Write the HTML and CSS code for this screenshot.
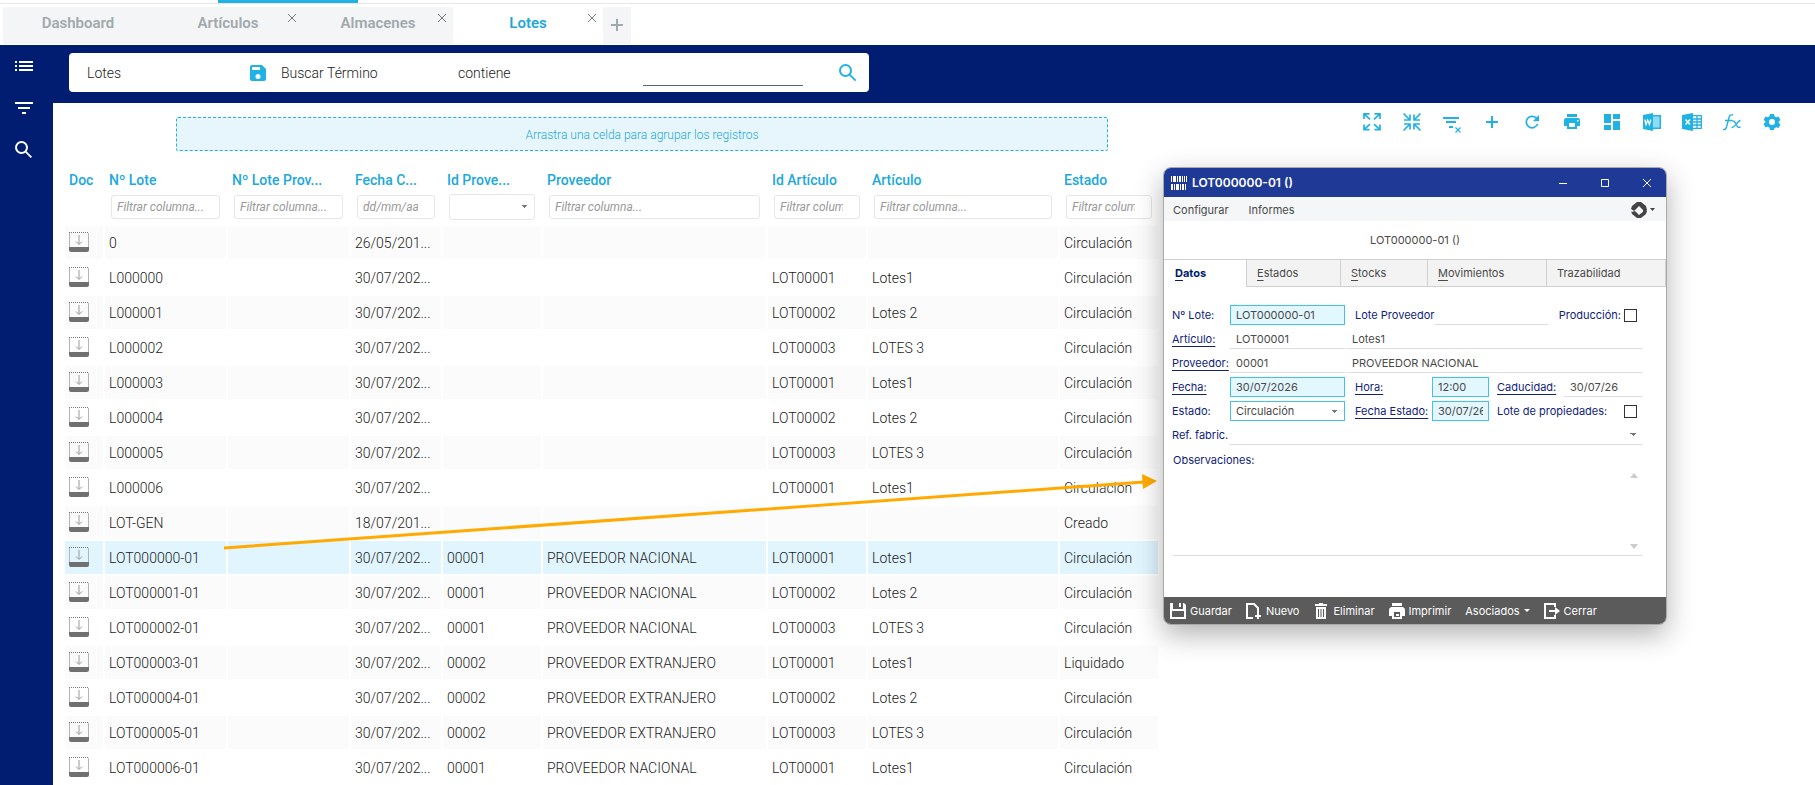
FILE: index.html
```
<!DOCTYPE html>
<html lang="es">
<head>
  <meta charset="UTF-8">
  <title>Lotes</title>
  <link rel="stylesheet" href="styles.css">
</head>
<body>
  <div class="top-line"><span></span></div>
  <nav class="tabs">
    <div class="tab"><a href="#">Dashboard</a></div>
    <div class="tab"><a href="#">Artículos</a><button class="tab-close" aria-label="Cerrar Artículos"><svg viewBox="0 0 8 8"><path d="M0 0l8 8M8 0l-8 8"/></svg></button></div>
    <div class="tab"><a href="#">Almacenes</a><button class="tab-close" aria-label="Cerrar Almacenes"><svg viewBox="0 0 8 8"><path d="M0 0l8 8M8 0l-8 8"/></svg></button></div>
    <div class="tab active"><a href="#">Lotes</a><button class="tab-close" aria-label="Cerrar Lotes"><svg viewBox="0 0 8 8"><path d="M0 0l8 8M8 0l-8 8"/></svg></button></div>
    <button class="tab-add" aria-label="Nueva pestaña"><svg viewBox="0 0 12 12"><path d="M6 0v12M0 6h12"/></svg></button>
  </nav>

  <div class="app">
    <aside class="sidebar">
      <button aria-label="Menú"><svg viewBox="0 0 18 18"><path d="M0 4h2v2H0zM4 4h14v2H4zM0 8h2v2H0zM4 8h14v2H4zM0 12h2v2H0zM4 12h14v2H4z"/></svg></button>
      <button aria-label="Filtros"><svg viewBox="0 0 18 18"><path d="M0 3h18v2H0zM3 8h12v2H3zM7 13h4v2H7z"/></svg></button>
      <button aria-label="Buscar"><svg viewBox="0 0 18 18"><circle cx="6.500" cy="6.500" r="5.500" fill="none" stroke="#fff" stroke-width="2"/><path d="M10 11.300l1.300-1.300 5.700 5.700-1.300 1.300z"/></svg></button>
    </aside>

    <main class="content">
      <header class="header">
        <form class="search-box">
          <span class="search-name">Lotes</span>
          <button type="button" class="search-save" aria-label="Guardar búsqueda"><svg viewBox="0 0 16 16"><path d="M2 0h10l4 4v10a2 2 0 0 1-2 2H2a2 2 0 0 1-2-2V2a2 2 0 0 1 2-2zM2 2v3h8V2zM8 9a2.500 2.500 0 1 0 0 5a2.500 2.500 0 1 0 0-5z" fill-rule="evenodd"/></svg></button>
          <label class="search-field" for="term">Buscar Término</label>
          <span class="search-op">contiene</span>
          <input type="text" id="term">
          <button type="button" class="search-go" aria-label="Buscar"><svg viewBox="0 0 18 18"><circle cx="6.500" cy="6.500" r="5.500" fill="none" stroke="#20b2e4" stroke-width="2"/><path d="M10 11.300l1.300-1.300 6 6-1.300 1.300z"/></svg></button>
        </form>
      </header>

      <div class="tool-row">
        <div class="group-panel">Arrastra una celda para agrupar los registros</div>
        <div class="toolbar">
          <button aria-label="Expandir"><svg viewBox="0 0 20 20"><g fill="none" stroke="#20b2e4" stroke-width="1.700"><path d="M2 7V1.800h5.500M2 1.800l6 5.500M12.500 1.800H18V7M18 1.800l-6 5.500M2 12.500v5.200h5.500M2 17.700l6-5.500M12.500 17.700H18v-5.200M18 17.700l-6-5.500"/></g></svg></button>
          <button aria-label="Contraer"><svg viewBox="0 0 20 20"><g fill="none" stroke="#20b2e4" stroke-width="1.700"><path d="M8 2.500V8H2M8 8L1.500 1.500M12 2.500V8h6M12 8l6.500-6.500M8 17.500V12H2M8 12l-6.500 6.500M12 17.500V12h6M12 12l6.500 6.500"/></g></svg></button>
          <button aria-label="Quitar filtros"><svg viewBox="0 0 20 20"><path d="M1 5h16v2H1zM4 9h10v2H4zM7 14h4v2H7z"/><path d="M13.500 15.500l5 5M18.500 15.500l-5 5" fill="none" stroke="#20b2e4" stroke-width="1.200"/></svg></button>
          <button aria-label="Añadir"><svg viewBox="0 0 20 20"><path d="M9 4h2v5h5v2h-5v5H9v-5H4V9h5z"/></svg></button>
          <button aria-label="Refrescar"><svg viewBox="0 0 20 20"><path d="M14.700 5.300A6.600 6.600 0 1 0 16.400 12h-1.800A4.900 4.900 0 1 1 13.500 6.500L10.800 9.200H17V3z"/></svg></button>
          <button aria-label="Imprimir"><svg viewBox="0 0 20 20"><path d="M5 2h10v3H5zM4 6h12a2 2 0 0 1 2 2v6h-3v3H5v-3H2V8a2 2 0 0 1 2-2zM7 11v4h6v-4zM15 8v1.500h1.500V8z" fill-rule="evenodd"/></svg></button>
          <button aria-label="Paneles"><svg viewBox="0 0 20 20"><path d="M2 2h7v9H2zM11 2h7v5h-7zM2 13h7v5H2zM11 9h7v9h-7z"/></svg></button>
          <button aria-label="Exportar a Word"><svg viewBox="0 0 20 20"><path d="M11 3.700h7.300v12.600H11" fill="#8fdcf4" stroke="#20b2e4" stroke-width="1.500"/><path d="M1 3l10-2v18L1 17z"/><path d="M2.800 7.500l1.200 5 1.700-4.500 1.700 4.500 1.400-5" fill="none" stroke="#fff" stroke-width="1.300"/></svg></button>
          <button aria-label="Exportar a Excel"><svg viewBox="0 0 20 20"><path d="M0 3l11-2v18L0 17z"/><path d="M11 3.700h8.300v12.600H11M11 7h8M11 10h8M11 13h8M15 4v12" fill="none" stroke="#20b2e4" stroke-width="1.300"/><path d="M3.500 7.500l4.500 5M8 7.500l-4.500 5" fill="none" stroke="#fff" stroke-width="1.500"/></svg></button>
          <button class="fx" aria-label="Fórmulas"><svg viewBox="0 0 20 20"><g fill="none" stroke="#20b2e4" stroke-width="1.400"><path d="M1 17.500c2 .5 3-.5 3.700-3L7 5.500C7.600 3 9 2.500 11 3M3 8.500h7"/><path d="M10 9c3-1 3.500 2 4.500 4s1.500 3 4 2M18.500 8.500c-3 0-5 7-9 7"/></g></svg></button>
          <button aria-label="Configuración"><svg viewBox="0 0 20 20"><path d="M8 2h4l.5 2.200 1.800 1 2.200-.7 2 3.400-1.700 1.500v1.700l1.700 1.500-2 3.400-2.200-.7-1.800 1L12 18H8l-.5-2.200-1.800-1-2.200.7-2-3.400 1.700-1.500V9L1.500 7.900l2-3.400 2.200.7 1.800-1zM10 7a3 3 0 1 0 0 6a3 3 0 1 0 0-6z" fill-rule="evenodd"/></svg></button>
        </div>
      </div>

      <table class="grid">
        <colgroup>
          <col class="c-doc"><col class="c-lote"><col class="c-lote"><col class="c-fecha"><col class="c-id"><col class="c-prov"><col class="c-id"><col class="c-art"><col class="c-id">
        </colgroup>
        <thead>
          <tr class="titles">
            <th>Doc</th><th>Nº Lote</th><th>Nº Lote Prov...</th><th>Fecha C...</th><th>Id Prove...</th><th>Proveedor</th><th>Id Artículo</th><th>Artículo</th><th>Estado</th>
          </tr>
          <tr class="filters">
            <td></td>
            <td><input type="text" aria-label="Nº Lote" placeholder="Filtrar columna..."></td>
            <td><input type="text" aria-label="Nº Lote Proveedor" placeholder="Filtrar columna..."></td>
            <td><input type="text" aria-label="Fecha" placeholder="dd/mm/aaaa"></td>
            <td><select aria-label="Id Proveedor"><option></option></select></td>
            <td><input type="text" aria-label="Proveedor" placeholder="Filtrar columna..."></td>
            <td><input type="text" aria-label="Id Artículo" placeholder="Filtrar columna..."></td>
            <td><input type="text" aria-label="Artículo" placeholder="Filtrar columna..."></td>
            <td><input type="text" aria-label="Estado" placeholder="Filtrar columna..."></td>
          </tr>
        </thead>
        <tbody id="rows"></tbody>
      </table>
    </main>
  </div>

  <svg class="arrow" viewBox="0 0 934 76"><path d="M0 71L920 5" fill="none" stroke="#ffaa00" stroke-width="3"/><path d="M918-3l15 7-14 8z" fill="#ffaa00"/></svg>

  <section class="window">
    <div class="title-bar">
      <svg class="barcode" viewBox="0 0 16 14"><path d="M0 0h1v6H0zM2 0h3v6H2zM6 0h1v6H6zM8 0h2v6H8zM11 0h1v6h-1zM13 0h1v6h-1zM15 0h1v6h-1zM0 8h2v6H0zM3 8h1v6H3zM5 8h3v6H5zM9 8h1v6H9zM11 8h2v6h-2zM14 8h1v6h-1z"/></svg>
      <h1>LOT000000-01 ()</h1>
      <button aria-label="Minimizar"><svg viewBox="0 0 8 8"><path d="M0 4.500h8"/></svg></button>
      <button aria-label="Maximizar"><svg viewBox="0 0 8 8"><path d="M.5.500h7v7h-7z"/></svg></button>
      <button aria-label="Cerrar ventana"><svg viewBox="0 0 8 8"><path d="M0 0l8 8M8 0l-8 8"/></svg></button>
    </div>
    <div class="menu-bar">
      <button>Configurar</button>
      <button>Informes</button>
      <button class="sync" aria-label="Opciones"><svg viewBox="0 0 24 16"><path d="M6 0h4l5 4 1 4-1 2h-3V8L8 4 3 9 0 7l1-3zM10 16H6l-5-4-1-3 1 1 3-1 4 4 5-4 3 0-1 3z"/><path d="M19 6h5l-2.500 3z"/></svg></button>
    </div>
    <p class="record-name">LOT000000-01 ()</p>
    <div class="window-tabs">
      <button class="w-datos active"><u>D</u>atos</button>
      <button class="w-estados"><u>E</u>stados</button>
      <button class="w-stocks"><u>S</u>tocks</button>
      <button class="w-mov"><u>M</u>ovimientos</button>
      <button class="w-traz">Trazabilidad</button>
    </div>
    <form class="record">
      <div class="line">
        <label class="lbl" for="lote">Nº Lote:</label>
        <input class="code key" type="text" id="lote" value="LOT000000-01">
        <label class="gap" for="lote-prov">Lote Proveedor</label>
        <input class="lote-prov" type="text" id="lote-prov">
        <label class="check">Producción:<input type="checkbox"></label>
      </div>
      <div class="line">
        <a class="lbl" href="#">Artículo:</a>
        <input class="code" type="text" aria-label="Artículo" value="LOT00001">
        <input class="name" type="text" aria-label="Nombre del artículo" value="Lotes1">
      </div>
      <div class="line">
        <a class="lbl" href="#">Proveedor:</a>
        <input class="code" type="text" aria-label="Proveedor" value="00001">
        <input class="name" type="text" aria-label="Nombre del proveedor" value="PROVEEDOR NACIONAL">
      </div>
      <div class="line">
        <a class="lbl" href="#">Fecha:</a>
        <input class="code key" type="text" aria-label="Fecha" value="30/07/2026">
        <a class="lbl-mid" href="#">Hora:</a>
        <input class="short key" type="text" aria-label="Hora" value="12:00">
        <a class="lbl-end" href="#">Caducidad:</a>
        <input class="cad" type="text" aria-label="Caducidad" value="30/07/26">
      </div>
      <div class="line">
        <label class="lbl" for="estado">Estado:</label>
        <select class="code" id="estado"><option>Circulación</option></select>
        <a class="lbl-mid" href="#">Fecha Estado:</a>
        <input class="short key" type="text" aria-label="Fecha Estado" value="30/07/26">
        <label class="check props">Lote de propiedades:<input type="checkbox"></label>
      </div>
      <div class="line">
        <label class="lbl" for="ref">Ref. fabric.</label>
        <select class="ref" id="ref"><option></option></select>
      </div>
      <label class="obs-label" for="obs">Observaciones:</label>
      <div class="obs">
        <textarea id="obs"></textarea>
        <div class="obs-scroll"><i class="up"></i><i class="down"></i></div>
      </div>
    </form>
    <footer class="actions">
      <button><svg viewBox="0 0 16 16"><path d="M0 0h3v6h10V0h1l2 2v14H0zM9 0h2v4H9zM2 8v6h12V8z" fill-rule="evenodd"/></svg>Guardar</button>
      <button><svg viewBox="0 0 16 16"><path d="M7 15H1V1h7l4 4v5" fill="none" stroke="#fff" stroke-width="2"/><path d="M11 10h2v2h2v2h-2v2h-2v-2H9v-2h2z"/></svg>Nuevo</button>
      <button><svg viewBox="0 0 16 16"><path d="M6 0h4v1h4v2H2V1h4zM3 4h10v12H3zM5 6v8h1V6zM7.500 6v8h1V6zM10 6v8h1V6z" fill-rule="evenodd"/></svg>Eliminar</button>
      <button><svg viewBox="0 0 16 16"><path d="M3 0h10v3H3zM2 4h12l2 2v7h-3v3H3v-3H0V6zM5 9v5h6V9zM7 11h3v2H7z" fill-rule="evenodd"/></svg>Imprimir</button>
      <button class="drop">Asociados<i></i></button>
      <button><svg viewBox="0 0 16 16"><path d="M11 4V1H1v14h10v-3" fill="none" stroke="#fff" stroke-width="2"/><path d="M5 7h6V4l5 4-5 4V9H5z"/></svg>Cerrar</button>
    </footer>
  </section>

  <script src="rows.js"></script>
</body>
</html>
```
FILE: rows.js
```
const lots = [
  ['0', '26/05/201...', '', '', '', '', 'Circulación'],
  ['L000000', '30/07/202...', '', '', 'LOT00001', 'Lotes1', 'Circulación'],
  ['L000001', '30/07/202...', '', '', 'LOT00002', 'Lotes 2', 'Circulación'],
  ['L000002', '30/07/202...', '', '', 'LOT00003', 'LOTES 3', 'Circulación'],
  ['L000003', '30/07/202...', '', '', 'LOT00001', 'Lotes1', 'Circulación'],
  ['L000004', '30/07/202...', '', '', 'LOT00002', 'Lotes 2', 'Circulación'],
  ['L000005', '30/07/202...', '', '', 'LOT00003', 'LOTES 3', 'Circulación'],
  ['L000006', '30/07/202...', '', '', 'LOT00001', 'Lotes1', 'Circulación'],
  ['LOT-GEN', '18/07/201...', '', '', '', '', 'Creado'],
  ['LOT000000-01', '30/07/202...', '00001', 'PROVEEDOR NACIONAL', 'LOT00001', 'Lotes1', 'Circulación'],
  ['LOT000001-01', '30/07/202...', '00001', 'PROVEEDOR NACIONAL', 'LOT00002', 'Lotes 2', 'Circulación'],
  ['LOT000002-01', '30/07/202...', '00001', 'PROVEEDOR NACIONAL', 'LOT00003', 'LOTES 3', 'Circulación'],
  ['LOT000003-01', '30/07/202...', '00002', 'PROVEEDOR EXTRANJERO', 'LOT00001', 'Lotes1', 'Liquidado'],
  ['LOT000004-01', '30/07/202...', '00002', 'PROVEEDOR EXTRANJERO', 'LOT00002', 'Lotes 2', 'Circulación'],
  ['LOT000005-01', '30/07/202...', '00002', 'PROVEEDOR EXTRANJERO', 'LOT00003', 'LOTES 3', 'Circulación'],
  ['LOT000006-01', '30/07/202...', '00001', 'PROVEEDOR NACIONAL', 'LOT00001', 'Lotes1', 'Circulación']
];

const docIcon = '<svg class="doc" viewBox="0 0 20 20">' +
  '<path d="M.5 15V1M19.500 15V1" fill="none" stroke="#b5b5b5"/>' +
  '<path d="M0 .5h20" fill="none" stroke="#777" stroke-dasharray="1 1"/>' +
  '<path d="M0 15h20v3a2 2 0 0 1-2 2H2a2 2 0 0 1-2-2z" fill="#707070"/>' +
  '<path d="M10 3v9M7 9.500l3 3 3-3" fill="none" stroke="#999"/></svg>';

document.getElementById('rows').innerHTML = lots.map(function (lot) {
  const cells = [docIcon, lot[0], ''].concat(lot.slice(1));
  const selected = lot[0] === 'LOT000000-01' ? ' class="selected"' : '';
  return '<tr' + selected + '><td>' + cells.join('</td><td>') + '</td></tr>';
}).join('');
```
FILE: styles.css
```
* {
  box-sizing: border-box;
}

body {
  margin: 0;
  height: 100vh;
  overflow: hidden;
  display: flex;
  flex-direction: column;
  background: #fff;
  color: #222;
  font-family: Roboto, sans-serif;
  font-size: 14px;
  font-weight: 300;
}

button {
  border: 0;
  padding: 0;
  background: none;
  color: inherit;
  font: inherit;
}

svg {
  display: block;
}

/* tabs */
.top-line {
  flex: none;
  height: 4px;
  border-bottom: 1px solid #e8e8e8;
  padding-left: 218px;
}

.top-line span {
  display: block;
  width: 140px;
  height: 3px;
  background: #20b2e4;
}

.tabs {
  flex: none;
  display: flex;
  height: 41px;
  padding: 3px 0 1px 3px;
}

.tab {
  position: relative;
  width: 150px;
  background: #f4f5f7;
  text-align: center;
  line-height: 32px;
}

.tab a {
  color: #a0a9ab;
  font-size: 15px;
  font-weight: 600;
  text-decoration: none;
}

.tab.active {
  background: #fff;
}

.tab.active a {
  color: #20a8dc;
}

.tab-close {
  position: absolute;
  top: 7px;
  right: 7px;
}

.tab-close svg {
  width: 8px;
  height: 8px;
  overflow: visible;
  stroke: #777;
}

.tab-add {
  width: 28px;
  padding: 0 8px;
  background: #f4f5f7;
}

.tab-add svg {
  width: 12px;
  height: 12px;
  margin-bottom: 2px;
  stroke: #a0a9ab;
  stroke-width: 2;
}

/* layout */
.app {
  flex: 1;
  display: flex;
  min-height: 0;
}

.sidebar {
  flex: none;
  width: 53px;
  background: #001d72;
  padding: 12px 15px;
}

.sidebar button {
  display: block;
  margin-bottom: 24px;
}

.sidebar svg {
  width: 18px;
  height: 18px;
  fill: #fff;
}

.content {
  flex: 1;
  min-width: 0;
}

.header {
  height: 58px;
  padding: 8px 16px;
  background: #001d72;
}

.search-box {
  display: flex;
  align-items: center;
  width: 800px;
  height: 39px;
  padding: 0 12px 0 18px;
  border-radius: 4px;
  background: #fff;
}

.search-name {
  width: 163px;
}

.search-save svg {
  width: 16px;
  height: 16px;
  fill: #20b2e4;
}

.search-field {
  width: 177px;
  margin-left: 15px;
}

.search-op {
  width: 185px;
}

.search-box input {
  width: 160px;
  height: 27px;
  border: 0;
  border-bottom: 1px solid #666;
  outline: 0;
}

.search-go {
  margin-left: auto;
}

.search-go svg {
  width: 18px;
  height: 18px;
  fill: #20b2e4;
}

.tool-row {
  display: flex;
  justify-content: space-between;
  align-items: flex-start;
  padding: 8px 33px 0 123px;
}

.group-panel {
  width: 932px;
  height: 34px;
  margin-top: 6px;
  border: 1px dashed #20b2e4;
  border-radius: 2px;
  background: #e7f6fc;
  color: #20a8dc;
  font-size: 12px;
  line-height: 34px;
  text-align: center;
}

.toolbar {
  display: flex;
  gap: 20px;
  padding-top: 1px;
}

.toolbar svg {
  width: 20px;
  height: 20px;
  overflow: visible;
  fill: #20b2e4;
}

/* grid */
.grid {
  width: 1097px;
  margin: 9px 0 0 10px;
  table-layout: fixed;
  border-spacing: 2px;
}

.c-doc {
  width: 38px;
}

.c-lote {
  width: 121px;
}

.c-fecha {
  width: 90px;
}

.c-id {
  width: 98px;
}

.c-prov {
  width: 223px;
}

.c-art {
  width: 190px;
}

.grid th,
.grid td {
  padding: 0 4px;
  overflow: hidden;
  text-align: left;
  white-space: nowrap;
}

.grid th {
  height: 27px;
  padding-top: 8px;
  color: #20a8dc;
  font-weight: 500;
}

.grid .filters td {
  height: 33px;
  padding: 0 6px 2px;
}

.filters input,
.filters select {
  display: block;
  width: 100%;
  height: 24px;
  border: 1px solid #e6e6e6;
  border-radius: 3px;
  padding: 0 16px 0 5px;
  background: #fff;
  color: #888;
  font: italic 12px Roboto, sans-serif;
}

.filters ::placeholder {
  color: #999;
}

select {
  appearance: none;
}

.filters select {
  height: 26px;
  background: conic-gradient(from -45deg at 50% 100%, #888 90deg, transparent 0) right 8px center / 6px 3px no-repeat #fff;
}

.grid tbody td {
  height: 33px;
}

.grid tbody tr:nth-child(odd) td {
  background: #fbfbfb;
}

.grid tbody tr.selected td {
  background: #e0f5fe;
}

.doc {
  width: 20px;
  height: 20px;
  margin-bottom: 2px;
}

.arrow {
  position: absolute;
  left: 224px;
  top: 477px;
  width: 934px;
  height: 76px;
  overflow: visible;
}

/* record window */
.window {
  position: absolute;
  right: 148px;
  top: 167px;
  width: 504px;
  overflow: hidden;
  border: 1px solid #aaa;
  border-radius: 8px;
  background: #fff;
  box-shadow: 0 10px 28px rgba(0, 0, 0, 0.3);
  color: #4a4a4a;
  font-family: Inter, sans-serif;
  font-size: 11px;
  font-weight: 400;
}

.title-bar {
  display: flex;
  align-items: center;
  height: 29px;
  padding: 0 15px 0 7px;
  background: #1f3a96;
  color: #fff;
}

.title-bar h1 {
  flex: 1;
  margin: 0 0 0 5px;
  font-size: 12px;
  font-weight: 600;
}

.title-bar button {
  margin-left: 34px;
}

.title-bar button svg {
  width: 8px;
  height: 8px;
  overflow: visible;
  fill: none;
  stroke: #fff;
}

.barcode {
  width: 16px;
  height: 14px;
  fill: #fff;
}

.menu-bar {
  display: flex;
  align-items: center;
  gap: 20px;
  height: 24px;
  padding: 2px 11px 0 9px;
  background: #f4f6f8;
}

.sync {
  margin-left: auto;
}

.sync svg {
  width: 24px;
  height: 16px;
  fill: #444;
}

.record-name {
  height: 38px;
  margin: 0;
  line-height: 38px;
  text-align: center;
}

.window-tabs {
  display: flex;
  height: 28px;
}

.window-tabs button {
  border: 1px solid #d0d0d0;
  border-left: 0;
  padding-left: 10px;
  background: #f3f3f3;
  text-align: left;
}

.window-tabs .active {
  border-bottom: 0;
  padding: 0 0 1px 11px;
  background: #fff;
  color: #001d72;
  font-weight: 700;
}

u,
.record a {
  text-decoration: underline;
  text-underline-offset: 3px;
}

.w-datos {
  width: 83px;
}

.w-estados {
  width: 94px;
}

.w-stocks {
  width: 87px;
}

.w-mov {
  width: 119px;
}

.w-traz {
  flex: 1;
}

.record {
  padding: 18px 24px 0 8px;
}

.line {
  display: flex;
  align-items: center;
  height: 20px;
  margin-bottom: 4px;
}

.record label,
.record a {
  color: #10237a;
  white-space: nowrap;
}

.record .lbl {
  width: 58px;
}

.line input[type="text"],
.line select {
  height: 20px;
  min-width: 0;
  border: 0;
  border-bottom: 1px solid #dcdce2;
  border-radius: 0;
  padding: 0 6px;
  background-color: #fff;
  color: #4a4a4a;
  font: inherit;
}

.line .code {
  width: 115px;
}

.line input.key,
.line select.code {
  border: 1px solid #3fc1f3;
  padding: 0 5px;
}

.line input.key {
  background: #e3f7fe;
}

.line .gap {
  margin-left: 10px;
}

.lote-prov {
  width: 113px;
  margin-left: 1px;
}

.line .name {
  flex: 1;
  margin-left: 1px;
}

.lbl-mid {
  width: 77px;
  margin-left: 10px;
}

.short {
  width: 57px;
}

.lbl-end {
  width: 67px;
  margin-left: 8px;
}

.cad {
  flex: 1;
}

.check {
  display: flex;
  flex: 1;
  align-items: center;
  justify-content: flex-end;
  gap: 3px;
  padding-right: 5px;
}

.props {
  justify-content: space-between;
  padding-left: 8px;
}

.check input {
  appearance: none;
  width: 13px;
  height: 13px;
  margin: 0;
  border: 1px solid #333;
  background: #fff;
}

.line select {
  background: conic-gradient(from -45deg at 50% 100%, #666 90deg, transparent 0) right 6px center / 6px 3px no-repeat;
}

.ref {
  flex: 1;
}

.obs-label {
  display: block;
  padding-left: 1px;
  line-height: 22px;
}

.obs {
  display: flex;
  height: 85px;
  margin-left: 1px;
  border-bottom: 1px solid #dcdce2;
}

.obs textarea {
  flex: 1;
  border: 0;
  outline: 0;
  resize: none;
}

.obs-scroll {
  display: flex;
  flex-direction: column;
  justify-content: space-between;
  padding: 2px 4px 6px 0;
}

/* scroll arrows, up and down */
.up,
.down {
  border: 4px solid transparent;
  border-top: 0;
  border-bottom: 5px solid #ccc;
}

.down {
  border-top: 5px solid #ccc;
  border-bottom: 0;
}

/* select arrows point down */
.line select,
.filters select {
  background-image: linear-gradient(to top right, transparent 50%, #777 50%), linear-gradient(to top left, transparent 50%, #777 50%);
  background-position: right 9px center, right 6px center;
  background-size: 3px 3px;
  background-repeat: no-repeat;
}

.actions {
  display: flex;
  align-items: center;
  gap: 14px;
  height: 27px;
  margin-top: 41px;
  padding: 0 6px;
  background: #5b5b5b;
  color: #fff;
}

.actions button {
  display: flex;
  align-items: center;
  gap: 4px;
}

.actions svg {
  width: 16px;
  height: 16px;
  fill: #fff;
}

.actions i {
  border: 3px solid transparent;
  border-top-color: #fff;
  border-bottom: 0;
}
```
